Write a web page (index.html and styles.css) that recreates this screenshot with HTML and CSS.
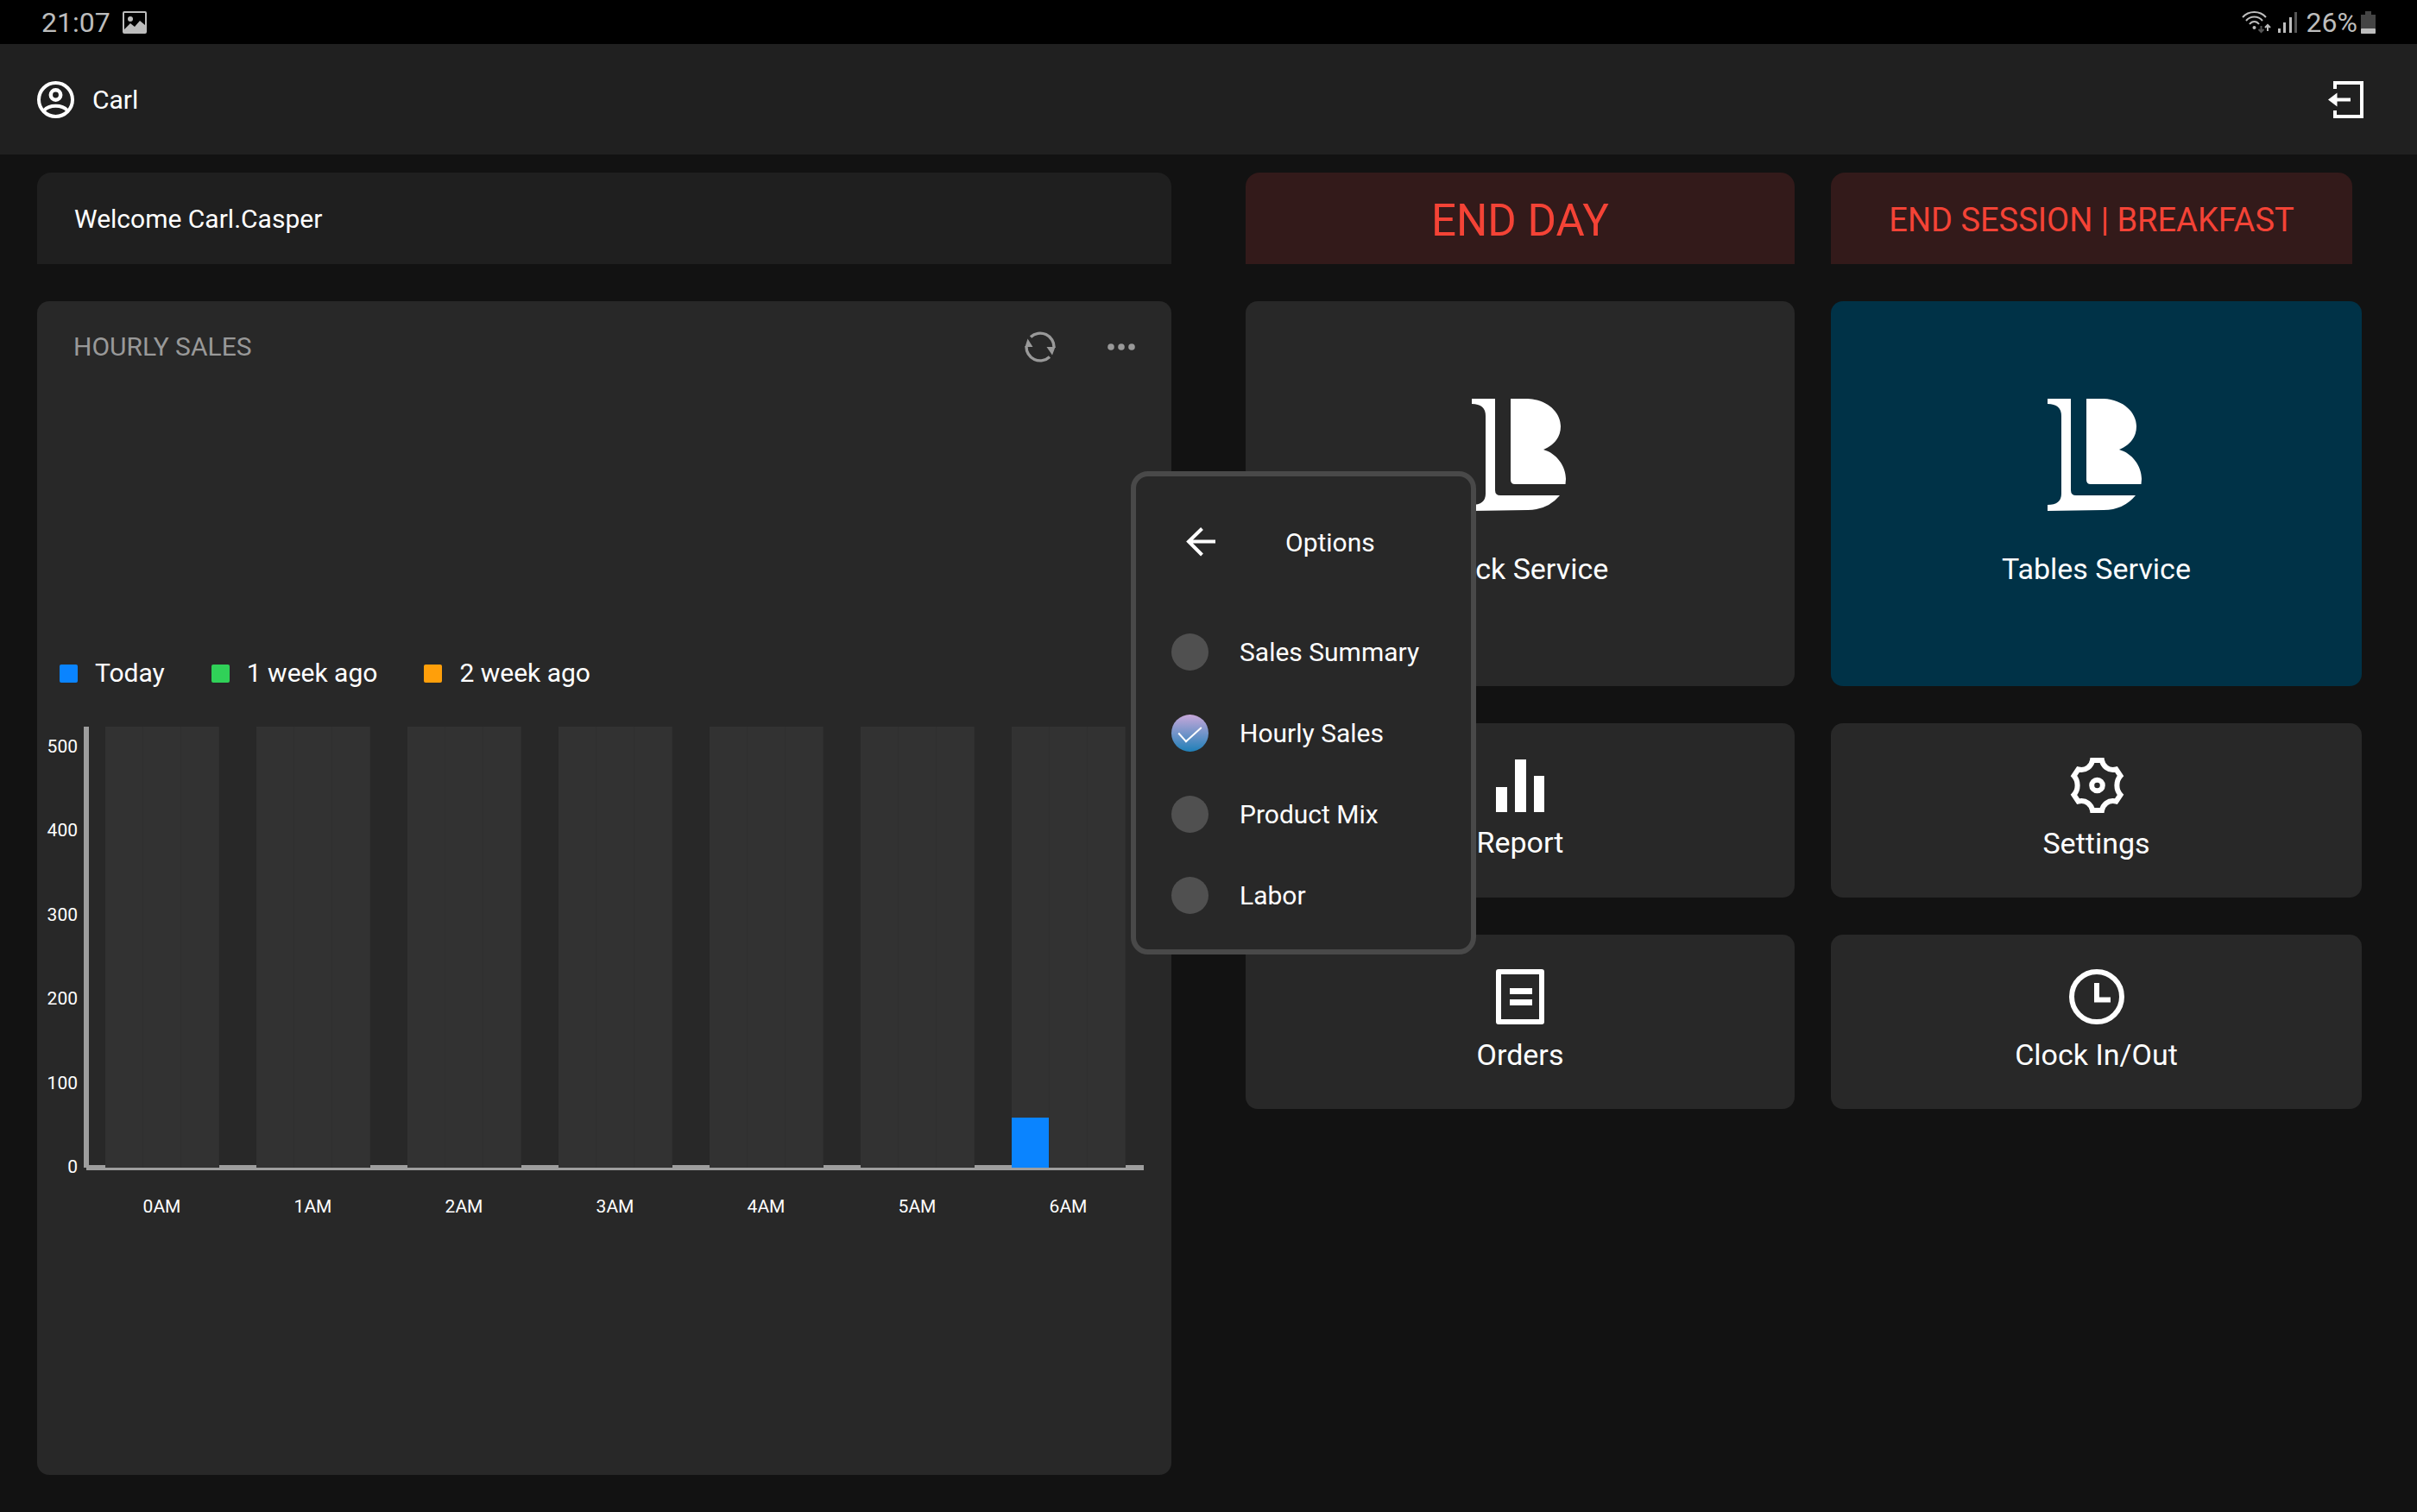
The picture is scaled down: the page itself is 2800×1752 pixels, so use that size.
FILE: index.html
```html
<!DOCTYPE html>
<html lang="en">
<head>
    <meta charset="UTF-8">
    <meta name="viewport" content="width=device-width, initial-scale=1.0">
    <title>Dashboard</title>
    <link rel="stylesheet" href="styles.css">
</head>
<body>
    <div class="status-bar">
        <span>21:07</span>
        <svg class="status-image" width="28" height="26" viewBox="0 0 28 26">
            <rect x="1" y="1" width="26" height="24" rx="1" fill="none" stroke="#bdbdbd" stroke-width="2"/>
            <circle cx="9" cy="9" r="3" fill="#bdbdbd"/>
            <path d="M2 21 L9 14 L14 18 L20 11 L26 16 V25 H2Z" fill="#bdbdbd"/>
        </svg>
        <div class="status-right">
            <svg width="34" height="26" viewBox="0 0 34 26" fill="none" stroke="#bdbdbd" stroke-width="2">
                <path d="M1 7 C8 -1 21 -1 28 7"/>
                <path d="M5 11 C10 5 19 5 24 11"/>
                <path d="M9 15 C12 11 17 11 20 15"/>
                <circle cx="14.500" cy="19" r="2" fill="#bdbdbd" stroke="none"/>
                <path d="M22.500 17 V24 M19.500 21 L22.500 24 L25.500 21" stroke="#555"/>
                <path d="M30 23 V16 M27 19 L30 16 L33 19"/>
            </svg>
            <svg class="status-signal" width="22" height="24" viewBox="0 0 22 24">
                <path d="M0 19H3V24H0Z M6 12H9V24H6Z M13 6H16V24H13Z" fill="#bdbdbd"/>
                <path d="M19 0H22V24H19Z" fill="#555"/>
            </svg>
            <span>26%</span>
            <svg class="status-battery" width="17" height="26" viewBox="0 0 17 26">
                <path d="M5 0H12V4H17V26H0V4H5Z" fill="#444"/>
                <rect y="20" width="17" height="6" rx="1" fill="#bdbdbd"/>
            </svg>
        </div>
    </div>

    <header class="header">
        <svg width="43" height="43" viewBox="0 0 43 43" fill="none" stroke="#fff" stroke-width="4">
            <circle cx="21.500" cy="21.500" r="19.500"/>
            <circle cx="21.500" cy="16" r="5.700" stroke-width="4.500"/>
            <path d="M8 34 C14 27 29 27 35 34"/>
        </svg>
        <span class="user-name">Carl</span>
        <button class="icon-btn logout" aria-label="Log out">
            <svg width="41" height="43" viewBox="0 0 41 43">
                <path d="M8 9 V2 H39 V41 H8 V34" fill="none" stroke="#fff" stroke-width="4"/>
                <path d="M0 21.500 L10.500 13.500 V19.500 H26 V23.500 H10.500 V29.500Z" fill="#fff"/>
            </svg>
        </button>
    </header>

    <main class="main">
        <div class="left">
            <div class="welcome">Welcome Carl.Casper</div>

            <section class="sales">
                <div class="sales-head">
                    <h2>HOURLY SALES</h2>
                    <button class="icon-btn" aria-label="Refresh">
                        <svg width="36" height="36" viewBox="0 0 36 36">
                            <path d="M7 6.500 A16 16 0 0 1 34 19 M29 29.500 A16 16 0 0 1 2 17" fill="none" stroke="#999" stroke-width="3.400"/>
                            <path d="M25.500 18 H35.500 L32 27.500Z M0.500 18 H9.500 L3.500 8.500Z" fill="#999"/>
                        </svg>
                    </button>
                    <button class="icon-btn" aria-label="Options">
                        <svg width="32" height="8" viewBox="0 0 32 8" fill="#999">
                            <circle cx="4" cy="4" r="3.800"/>
                            <circle cx="16" cy="4" r="3.800"/>
                            <circle cx="28" cy="4" r="3.800"/>
                        </svg>
                    </button>
                </div>

                <ul class="legend">
                    <li><span class="swatch today"></span>Today</li>
                    <li><span class="swatch week1"></span>1 week ago</li>
                    <li><span class="swatch week2"></span>2 week ago</li>
                </ul>

                <div class="chart">
                    <div class="y-labels">
                        <span>500</span>
                        <span>400</span>
                        <span>300</span>
                        <span>200</span>
                        <span>100</span>
                        <span>0</span>
                    </div>
                    <div class="y-line"></div>
                    <div class="plot">
                        <div class="bars">
                            <div class="group"><i></i><i></i><i></i></div>
                            <div class="group"><i></i><i></i><i></i></div>
                            <div class="group"><i></i><i></i><i></i></div>
                            <div class="group"><i></i><i></i><i></i></div>
                            <div class="group"><i></i><i></i><i></i></div>
                            <div class="group"><i></i><i></i><i></i></div>
                            <div class="group"><i><b style="height: 11.3%"></b></i><i></i><i></i></div>
                        </div>
                        <div class="x-labels">
                            <span>0AM</span>
                            <span>1AM</span>
                            <span>2AM</span>
                            <span>3AM</span>
                            <span>4AM</span>
                            <span>5AM</span>
                            <span>6AM</span>
                        </div>
                    </div>
                </div>

                <!-- options popup -->
                <div class="popup">
                    <div class="popup-head">
                        <button class="icon-btn" aria-label="Back">
                            <svg width="34" height="34" viewBox="0 0 34 34" fill="none" stroke="#fff" stroke-width="4">
                                <path d="M34 16.500 H3 M18.500 1.500 L3 16.500 L18.500 32"/>
                            </svg>
                        </button>
                        <span>Options</span>
                    </div>
                    <label class="option"><input type="radio" name="view"><span>Sales Summary</span></label>
                    <label class="option"><input type="radio" name="view" checked><span>Hourly Sales</span></label>
                    <label class="option"><input type="radio" name="view"><span>Product Mix</span></label>
                    <label class="option"><input type="radio" name="view"><span>Labor</span></label>
                </div>
            </section>
        </div>

        <div class="right">
            <button class="end-btn end-day">END DAY</button>
            <button class="end-btn end-session">END SESSION | BREAKFAST</button>

            <button class="tile big">
                <svg width="113" height="130" viewBox="0 0 113 130" fill="#fff">
                    <path d="M0 0 H27 V106 Q27 112 33 112 H102 Q88 129 65 129 L0 130 V123 Q16 123 16 110 V20 Q16 6 0 6Z"/>
                    <path d="M45 0 H65 C88 1 103 16 103 32 C103 45 95 54 83 59 C98 63 109 78 109 93 L108.500 99 H50 Q45 99 45 94Z"/>
                </svg>
                <span>Quick Service</span>
            </button>
            <button class="tile big active">
                <svg width="113" height="130" viewBox="0 0 113 130" fill="#fff">
                    <path d="M0 0 H27 V106 Q27 112 33 112 H102 Q88 129 65 129 L0 130 V123 Q16 123 16 110 V20 Q16 6 0 6Z"/>
                    <path d="M45 0 H65 C88 1 103 16 103 32 C103 45 95 54 83 59 C98 63 109 78 109 93 L108.500 99 H50 Q45 99 45 94Z"/>
                </svg>
                <span>Tables Service</span>
            </button>

            <button class="tile">
                <svg width="56" height="61" viewBox="0 0 56 61" fill="#fff">
                    <path d="M0 32H13V61H0Z M22 0H35V61H22Z M44 19H56V61H44Z"/>
                </svg>
                <span>Report</span>
            </button>
            <button class="tile">
                <svg width="64" height="64" viewBox="0 0 64 64" fill="none" stroke="#fff" stroke-width="6">
                    <path d="M27 3 H38 C39 9 45 16 54.500 13.500 L59.500 21 C54 27 54 37 59.500 43 L54.500 50.500 C45 48 39 55 38 61 H27 C26 55 20 48 10.500 50.500 L5.500 43 C11 37 11 27 5.500 21 L10.500 13.500 C20 16 26 9 27 3Z"/>
                    <circle cx="32.500" cy="32" r="6.300"/>
                </svg>
                <span>Settings</span>
            </button>

            <button class="tile">
                <svg width="56" height="64" viewBox="0 0 56 64">
                    <rect x="3" y="3" width="50" height="58" fill="none" stroke="#fff" stroke-width="6" stroke-linejoin="round"/>
                    <path d="M16 22H42V29H16Z M16 35H42V42H16Z" fill="#fff"/>
                </svg>
                <span>Orders</span>
            </button>
            <button class="tile">
                <svg width="64" height="64" viewBox="0 0 64 64" fill="none" stroke="#fff" stroke-width="6">
                    <circle cx="32" cy="32" r="29"/>
                    <path d="M32 16 V35.500 H48"/>
                </svg>
                <span>Clock In/Out</span>
            </button>
        </div>
    </main>
</body>
</html>
```
FILE: styles.css
```css
* {
    box-sizing: border-box;
}
body {
    margin: 0;
    min-height: 100vh;
    display: flex;
    flex-direction: column;
    background: #121212;
    color: #fff;
    font-family: Roboto, sans-serif;
    font-size: 30px;
    line-height: 40px;
}
svg {
    display: block;
    flex-shrink: 0;
}
button {
    border: none;
    color: inherit;
    font-family: inherit;
    cursor: pointer;
}
.icon-btn {
    background: none;
    padding: 0;
}

/* status bar */
.status-bar {
    display: flex;
    align-items: center;
    height: 51px;
    padding: 0 48px;
    background: #000;
    color: #bdbdbd;
    font-size: 32px;
}
.status-image {
    margin-left: 14px;
}
.status-right {
    display: flex;
    align-items: center;
    margin-left: auto;
}
.status-signal {
    margin: 0 11px 0 8px;
}
.status-battery {
    margin-left: 4px;
}

/* header */
.header {
    display: flex;
    align-items: center;
    height: 128px;
    padding: 0 62px 0 43px;
    background: #202020;
}
.user-name {
    margin-left: 21px;
    padding-top: 2px;
}
.logout {
    margin-left: auto;
}

.main {
    flex: 1;
    display: flex;
    gap: 86px;
    padding: 21px 64px 43px 43px;
}
.left {
    flex: 1314 1 0;
    display: flex;
    flex-direction: column;
    gap: 43px;
}
.right {
    flex: 1293 1 0;
    display: grid;
    grid-template-columns: 636fr 615fr;
    grid-template-rows: 106px 446px 202px 202px;
    gap: 43px 42px;
}

.welcome {
    height: 106px;
    padding: 34px 43px;
    background: #1f1f1f;
    border-radius: 16px 16px 0 0;
}

/* hourly sales */
.sales {
    position: relative;
    flex: 1;
    background: #282828;
    border-radius: 14px;
}
.sales-head {
    display: flex;
    align-items: center;
    gap: 60px;
    height: 106px;
    padding: 0 42px;
}
.sales-head h2 {
    flex: 1;
    margin: 0;
    font-size: 30px;
    font-weight: 400;
    color: #999;
}
.legend {
    display: flex;
    gap: 54px;
    margin: 305px 0 42px;
    padding: 0 26px;
    list-style: none;
}
.legend li {
    display: flex;
    align-items: center;
    gap: 20px;
}
.swatch {
    width: 21px;
    height: 21px;
    border-radius: 2px;
}
.today {
    background: #0a84ff;
}
.week1 {
    background: #30d158;
}
.week2 {
    background: #ff9f0a;
}

.chart {
    display: flex;
    height: 511px;
    padding-right: 32px;
    font-size: 21px;
    line-height: 24px;
}
.y-labels {
    display: flex;
    flex-direction: column;
    justify-content: space-between;
    width: 54px;
    margin: 11px 0 -11px;
    padding-right: 7px;
    text-align: right;
}
.y-line {
    width: 6px;
    background: #9e9e9e;
}
.plot {
    flex: 1;
    margin-left: -3px;
}
.bars {
    display: flex;
    height: 514px;
    border-bottom: 3px solid #9e9e9e;
    box-shadow: inset 0 -3px #9e9e9e;
}
.group {
    flex: 1;
    display: flex;
    margin: 0 21px 0 22px;
}
.group i {
    flex: 1;
    display: flex;
    align-items: flex-end;
    background: #323232;
    border-right: 1px solid #2f2f2f;
}
.group b {
    width: 100%;
    background: #0a84ff;
}
.x-labels {
    display: grid;
    grid-template-columns: repeat(7, 1fr);
    margin-top: 30px;
    text-align: center;
}

/* popup */
.popup {
    position: absolute;
    top: 197px;
    right: -353px;
    width: 400px;
    height: 560px;
    background: #282828;
    border: 6px solid #494949;
    border-radius: 20px;
}
.popup-head {
    display: flex;
    align-items: center;
    gap: 81px;
    height: 152px;
    margin-bottom: 4px;
    padding-left: 58px;
}
.popup span {
    padding-top: 2px;
}
.option {
    display: flex;
    align-items: center;
    gap: 36px;
    height: 94px;
    padding-left: 41px;
}
.option input {
    appearance: none;
    display: flex;
    justify-content: center;
    width: 43px;
    height: 43px;
    margin: 0;
    background: #505050;
    border-radius: 50%;
}
.option input:checked {
    background: linear-gradient(#c8a8da, #1f80b8);
}
.option input:checked::after {
    content: "";
    width: 23px;
    height: 12px;
    margin-top: 12px;
    border: solid #fff;
    border-width: 0 0 2px 2px;
    transform: rotate(-42deg);
}

/* tiles */
.end-btn {
    padding: 4px 0 0;
    background: #331a1a;
    border-radius: 16px 16px 0 0;
    color: #f44336;
}
.end-day {
    font-size: 51px;
}
.end-session {
    margin-right: 11px;
    font-size: 38px;
}
.tile {
    display: flex;
    flex-direction: column;
    align-items: center;
    justify-content: center;
    gap: 15px;
    padding: 0 0 3px;
    background: #282828;
    border-radius: 14px;
    font-size: 34px;
    line-height: 40px;
}
.big {
    gap: 47px;
}
.active {
    background: #003247;
}
```
